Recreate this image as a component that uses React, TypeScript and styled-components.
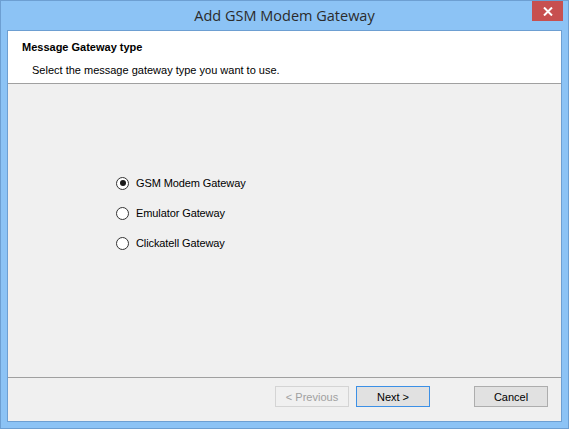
import { useState } from "react";
import styled, { createGlobalStyle } from "styled-components";

const GlobalStyle = createGlobalStyle`
  html, body {
    margin: 0;
    padding: 0;
    background: #ffffff;
  }
  body {
    font-family: "Liberation Sans", Arial, sans-serif;
  }
`;

const gateways = ["GSM Modem Gateway", "Emulator Gateway", "Clickatell Gateway"];

function App() {
  const [selected, setSelected] = useState(0);

  return (
    <>
      <GlobalStyle />
      <Window>
        <TitleBar>
          <Title>Add GSM Modem Gateway</Title>
          <CloseButton aria-label="Close">
            <svg width="10" height="9" viewBox="0 0 10 9">
              <path d="M1 0.5 L9 8.5 M9 0.5 L1 8.5" stroke="#ffffff" strokeWidth="2" />
            </svg>
          </CloseButton>
        </TitleBar>
        <Client>
          <Header>
            <HeaderTitle>Message Gateway type</HeaderTitle>
            <HeaderText>Select the message gateway type you want to use.</HeaderText>
          </Header>
          <Body>
            <RadioGroup>
              {gateways.map((name, i) => (
                <RadioRow key={name} onClick={() => setSelected(i)}>
                  <RadioCircle $checked={selected === i} />
                  <RadioLabel>{name}</RadioLabel>
                </RadioRow>
              ))}
            </RadioGroup>
          </Body>
          <Footer>
            <Button disabled>&lt; Previous</Button>
            <Button $focused>Next &gt;</Button>
            <Button $gapLeft>Cancel</Button>
          </Footer>
        </Client>
      </Window>
    </>
  );
}

export default App;

const Window = styled.div`
  width: 569px;
  height: 429px;
  box-sizing: border-box;
  border: 1px solid #6d9fd2;
  background: #8cc3f5;
  display: flex;
  flex-direction: column;
  padding: 0 6px 6px 6px;
`;

const TitleBar = styled.div`
  position: relative;
  height: 29px;
  display: flex;
  align-items: center;
  justify-content: center;
`;

const Title = styled.div`
  font-family: "Open Sans", "Noto Sans", sans-serif;
  font-size: 14.5px;
  color: #2b2b2b;
  margin-top: -1px;
`;

const CloseButton = styled.div`
  position: absolute;
  top: 0;
  right: -1px;
  width: 31px;
  height: 20px;
  background: #c75050;
  display: flex;
  align-items: center;
  justify-content: center;
`;

const Client = styled.div`
  flex: 1;
  border: 1px solid #6d9fd2;
  background: #f0f0f0;
  display: flex;
  flex-direction: column;
  font-size: 11px;
  color: #000;
`;

const Header = styled.div`
  height: 53px;
  box-sizing: border-box;
  background: #ffffff;
  border-bottom: 1px solid #a0a0a0;
  padding: 9px 0 0 14px;
`;

const HeaderTitle = styled.div`
  font-weight: bold;
  font-size: 11px;
  line-height: 14px;
`;

const HeaderText = styled.div`
  font-size: 11px;
  line-height: 14px;
  margin: 9px 0 0 10px;
`;

const Body = styled.div`
  flex: 1;
  border-bottom: 1px solid #a0a0a0;
  padding: 92px 0 0 108px;
`;

const RadioGroup = styled.div`
  display: flex;
  flex-direction: column;
  gap: 16px;
`;

const RadioRow = styled.div`
  display: flex;
  align-items: center;
  height: 14px;
  cursor: default;
`;

const RadioCircle = styled.span<{ $checked: boolean }>`
  width: 11px;
  height: 11px;
  border: 1px solid #333333;
  border-radius: 50%;
  background: #ffffff;
  display: flex;
  align-items: center;
  justify-content: center;
  &::after {
    content: "";
    width: 6px;
    height: 6px;
    border-radius: 50%;
    background: ${(p) => (p.$checked ? "#1a1a1a" : "transparent")};
  }
`;

const RadioLabel = styled.span`
  margin-left: 7px;
  font-size: 11px;
  line-height: 14px;
  letter-spacing: -0.1px;
`;

const Footer = styled.div`
  height: 43px;
  box-sizing: border-box;
  display: flex;
  align-items: flex-start;
  padding: 8px 0 0 267px;
  gap: 7px;
`;

const Button = styled.button<{ $focused?: boolean; $gapLeft?: boolean }>`
  width: 74px;
  height: 21px;
  box-sizing: border-box;
  margin-left: ${(p) => (p.$gapLeft ? "37px" : "0")};
  border: 1px solid ${(p) => (p.$focused ? "#3c90e6" : "#adadad")};
  background: #e1e1e1;
  font-family: "Liberation Sans", Arial, sans-serif;
  font-size: 11px;
  color: #000;
  padding: 0;
  &:disabled {
    border-color: #d4d4d4;
    background: #f0f0f0;
    color: #a0a0a0;
  }
`;
